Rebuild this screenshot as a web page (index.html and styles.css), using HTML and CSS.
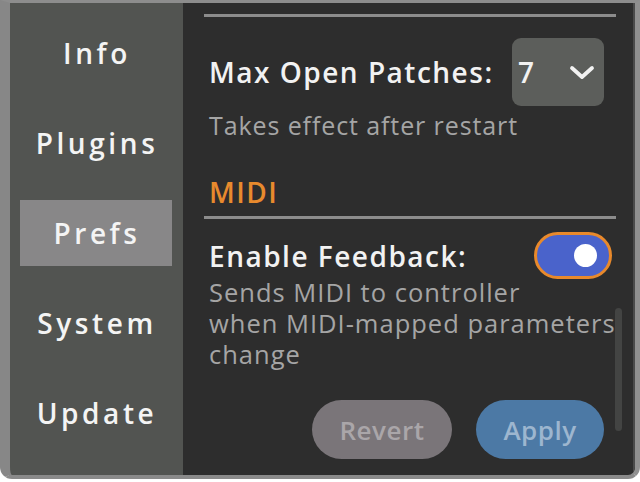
FILE: index.html
```html
<!DOCTYPE html>
<html>
<head>
<meta charset="utf-8">
<link rel="stylesheet" href="styles.css">
</head>
<body>
<div class="window">
  <nav class="sidebar">
    <div class="tab">Info</div>
    <div class="tab">Plugins</div>
    <div class="tab active">Prefs</div>
    <div class="tab">System</div>
    <div class="tab">Update</div>
  </nav>
  <main class="content">
    <div class="inner">
      <div class="sep top"></div>
      <div class="row patches">
        <span class="label">Max Open Patches:</span>
        <div class="select">
          <span class="value">7</span>
          <svg class="chev" width="26" height="16" viewBox="0 0 26 16"><path d="M3 3 L13 12 L23 3" fill="none" stroke="#f2f2f2" stroke-width="3.8" stroke-linecap="round" stroke-linejoin="round"/></svg>
        </div>
      </div>
      <p class="desc first">Takes effect after restart</p>
      <h2 class="section">MIDI</h2>
      <div class="sep"></div>
      <div class="row feedback">
        <span class="label">Enable Feedback:</span>
        <div class="toggle"><span class="knob"></span></div>
      </div>
      <p class="desc multi">Sends MIDI to controller<br>when MIDI-mapped parameters<br>change</p>
      <div class="buttons">
        <button class="btn revert">Revert</button>
        <button class="btn apply">Apply</button>
      </div>
    </div>
    <div class="scrollbar"></div>
  </main>
</div>
</body>
</html>
```

FILE: styles.css
```css
* { box-sizing: border-box; }
html, body { margin: 0; padding: 0; background: #ffffff; overflow: hidden; }
body { width: 640px; height: 482px; font-family: "Open Sans", "DejaVu Sans", sans-serif; }

.window {
  width: 640px;
  height: 479px;
  display: flex;
  background: #8a8a8a;
  border-top: 3px solid #8d8d8d;
  border-left: 10px solid #878787;
  border-right: 5px solid #8f8f8f;
  border-bottom: 4px solid #8a8a8a;
  border-radius: 0 0 12px 12px;
  overflow: hidden;
}

.sidebar {
  width: 173px;
  flex: none;
  background: #525451;
  display: flex;
  flex-direction: column;
  gap: 24px;
  padding: 17px 11px 0 10px;
}
.tab {
  height: 66px;
  display: flex;
  align-items: center;
  justify-content: center;
  color: #f4f4f4;
  font-size: 28px;
  font-weight: 600;
  letter-spacing: 3.6px;
  padding-left: 2px;
}
.tab.active { background: #888788; }

.content {
  flex: 1;
  min-width: 0;
  overflow: hidden;
  position: relative;
  background: #2d2d2d;
  border-right: 2px solid #4a4a4a;
}
.inner {
  padding: 11px 17px 0 21px;
  display: flex;
  flex-direction: column;
}
.sep {
  height: 3px;
  background: #8c8c8c;
}
.row {
  display: flex;
  align-items: center;
  justify-content: space-between;
  padding-left: 5px;
}
.label {
  color: #f2f2f2;
  font-size: 28px;
  font-weight: 600;
  letter-spacing: 1.5px;
}
.patches { margin-top: 21px; padding-right: 12px; }
.select {
  width: 92px;
  height: 68px;
  background: #5c5e5b;
  border-radius: 9px;
  display: flex;
  align-items: center;
  justify-content: space-between;
  padding: 0 9px 0 6px;
}
.value { color: #f2f2f2; font-size: 28px; font-weight: 600; }
.chev { margin-top: 2px; }
.desc {
  margin: 0;
  padding-left: 5px;
  color: #a5a5a5;
  font-size: 25px;
  letter-spacing: 0.9px;
}
.desc.first { margin-top: 4px; line-height: 30px; }
.section {
  margin: 35px 0 7px;
  padding-left: 5px;
  color: #e88a2d;
  font-size: 28px;
  font-weight: 600;
  line-height: 34px;
  letter-spacing: 1.5px;
}
.feedback { margin-top: 13px; padding-right: 4px; }
.toggle {
  width: 78px;
  height: 47px;
  border-radius: 24px;
  background: #4a63cb;
  border: 3px solid #e8892b;
  position: relative;
}
.knob {
  position: absolute;
  right: 12px;
  top: 9px;
  width: 23px;
  height: 23px;
  border-radius: 50%;
  background: #ffffff;
}
.desc.multi { margin-top: -2px; font-size: 25.5px; line-height: 31px; letter-spacing: 1px; white-space: nowrap; }
.buttons {
  margin-top: 30px;
  display: flex;
  justify-content: flex-end;
  gap: 24px;
  padding-right: 12px;
}
.btn {
  height: 59px;
  border: none;
  border-radius: 30px;
  font-family: "Open Sans", "DejaVu Sans", sans-serif;
  font-size: 26px;
  font-weight: 600;
  letter-spacing: 0.5px;
  padding: 0;
}
.revert { width: 140px; background: #7a7579; color: #aaa6a9; }
.apply { width: 128px; background: #4c79a5; color: #9db6cf; }
.scrollbar {
  position: absolute;
  right: 11px;
  top: 305px;
  width: 7px;
  height: 123px;
  border-radius: 4px;
  background: #434443;
}
```
